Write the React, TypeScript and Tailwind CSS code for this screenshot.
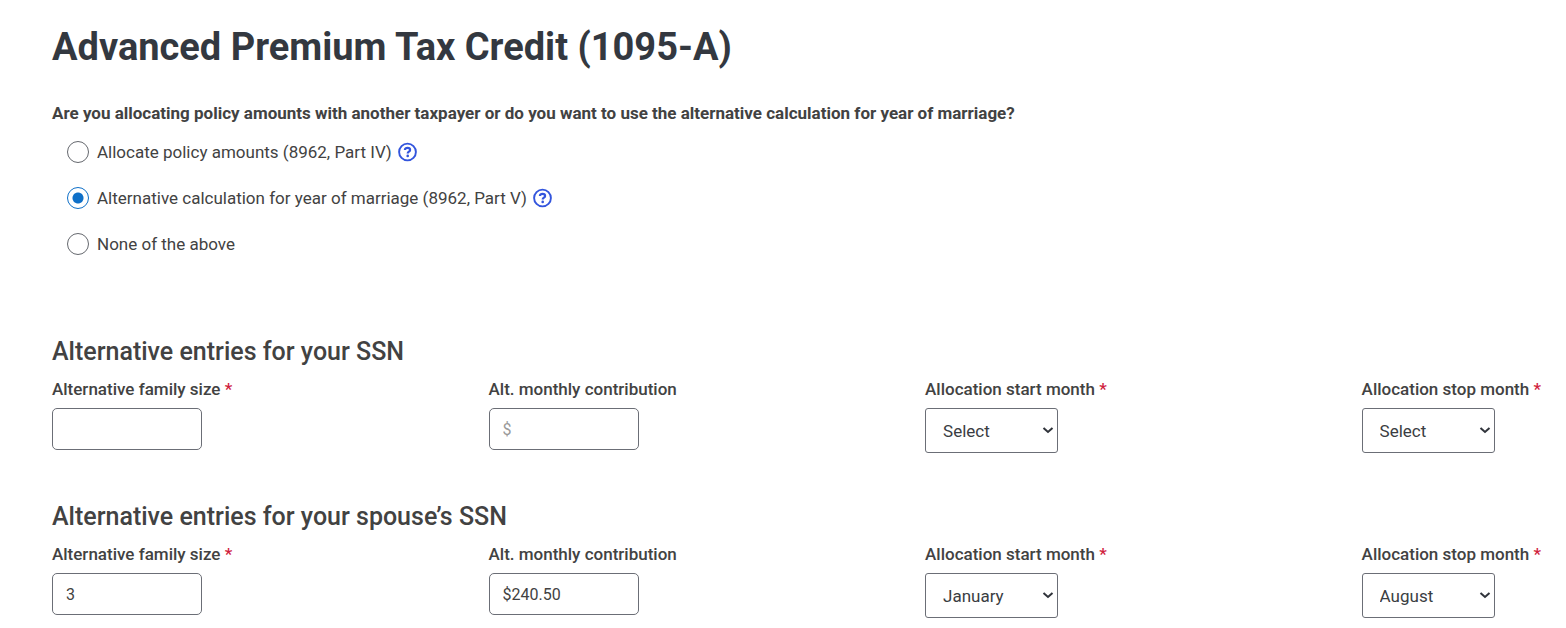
import { useState } from "react";

const MONTHS = [
  "January",
  "February",
  "March",
  "April",
  "May",
  "June",
  "July",
  "August",
  "September",
  "October",
  "November",
  "December",
];

const METHODS = [
  { value: "allocate", label: "Allocate policy amounts (8962, Part IV)", help: true },
  { value: "marriage", label: "Alternative calculation for year of marriage (8962, Part V)", help: true },
  { value: "none", label: "None of the above", help: false },
];

const SECTIONS = [
  { id: "self", title: "Alternative entries for your SSN", size: "", contribution: "", start: "", stop: "" },
  {
    id: "spouse",
    title: "Alternative entries for your spouse’s SSN",
    size: "3",
    contribution: "$240.50",
    start: "January",
    stop: "August",
  },
];

function HelpIcon() {
  return (
    <svg className="w-5 h-5" viewBox="0 0 20 20" fill="none" stroke="#3355dd" aria-hidden="true">
      <circle cx="9.5" cy="10" r="8.4" strokeWidth="1.9" />
      <path d="M6.9 8.1c0-1.5 1.2-2.3 2.6-2.3s2.6.8 2.6 2.1c0 1.8-2.4 1.8-2.4 3.6" strokeWidth="2.2" />
      <circle cx="9.7" cy="13.9" r="1.3" fill="#3355dd" stroke="none" />
    </svg>
  );
}

function FieldLabel({ htmlFor, text, required }: { htmlFor: string; text: string; required?: boolean }) {
  return (
    <label htmlFor={htmlFor} className="block mb-[9px] text-[17px] leading-5 font-medium whitespace-nowrap">
      {text}
      {required && <span className="text-[#d0213c]"> *</span>}
    </label>
  );
}

function TextField(props: { id: string; label: string; value: string; required?: boolean; placeholder?: string }) {
  return (
    <div>
      <FieldLabel htmlFor={props.id} text={props.label} required={props.required} />
      <input
        id={props.id}
        type="text"
        defaultValue={props.value}
        placeholder={props.placeholder}
        className="block w-[150px] h-[42px] px-[13px] rounded-[5px] border border-[#6b6e76] bg-white text-base placeholder:text-[#999999]"
      />
    </div>
  );
}

function MonthField({ id, label, value }: { id: string; label: string; value: string }) {
  return (
    <div>
      <FieldLabel htmlFor={id} text={label} required />
      <div className="relative w-[133px]">
        <select
          id={id}
          defaultValue={value}
          className="block w-full h-[45px] pt-[2px] pl-[17px] pr-6 appearance-none rounded-[3px] border border-[#6b6e76] bg-white text-[17px] text-[#3a3d42]"
        >
          <option value="">Select</option>
          {MONTHS.map((month) => (
            <option key={month}>{month}</option>
          ))}
        </select>
        <svg
          className="absolute right-1 top-4 w-3 h-3 pointer-events-none"
          viewBox="0 0 12 12"
          fill="none"
          stroke="#30343b"
          strokeWidth="2"
        >
          <path d="M1.5 4l4.5 4 4.5-4" />
        </svg>
      </div>
    </div>
  );
}

export default function App() {
  const [method, setMethod] = useState("marriage");

  return (
    <main className="min-h-screen bg-white pt-[25px] pl-[52px] pr-[25px] font-['Roboto',sans-serif] text-[#424242]">
      <h1 className="text-[38px] leading-[44px] font-bold text-[#333840]">Advanced Premium Tax Credit (1095-A)</h1>

      <fieldset className="mt-8">
        <legend className="text-[17px] leading-6 font-bold">
          Are you allocating policy amounts with another taxpayer or do you want to use the alternative calculation for
          year of marriage?
        </legend>
        <div className="mt-4 ml-[15px] space-y-6">
          {METHODS.map((item) => (
            <div key={item.value} className="flex items-center h-[22px]">
              <input
                id={item.value}
                type="radio"
                name="method"
                checked={method === item.value}
                onChange={() => setMethod(item.value)}
                className="w-[22px] h-[22px] shrink-0 appearance-none rounded-full border border-[#65686e] bg-white checked:border-[#0f70c8] checked:bg-[radial-gradient(circle,#0f70c8_5px,white_6px)]"
              />
              <label htmlFor={item.value} className="pl-2 text-[17px] leading-[22px]">
                {item.label}
              </label>
              {item.help && (
                <button type="button" aria-label="Help" className="ml-[6px]">
                  <HelpIcon />
                </button>
              )}
            </div>
          ))}
        </div>
      </fieldset>

      <div className="mt-20 space-y-[47px]">
        {SECTIONS.map((section) => (
          <section key={section.id}>
            <h2 className="text-[25px] leading-[34px] font-medium">{section.title}</h2>
            <div className="mt-[10px] grid grid-cols-[1fr_1fr_1fr_auto]">
              <TextField id={`${section.id}-size`} label="Alternative family size" value={section.size} required />
              <TextField
                id={`${section.id}-contribution`}
                label="Alt. monthly contribution"
                value={section.contribution}
                placeholder="$"
              />
              <MonthField id={`${section.id}-start`} label="Allocation start month" value={section.start} />
              <MonthField id={`${section.id}-stop`} label="Allocation stop month" value={section.stop} />
            </div>
          </section>
        ))}
      </div>
    </main>
  );
}
